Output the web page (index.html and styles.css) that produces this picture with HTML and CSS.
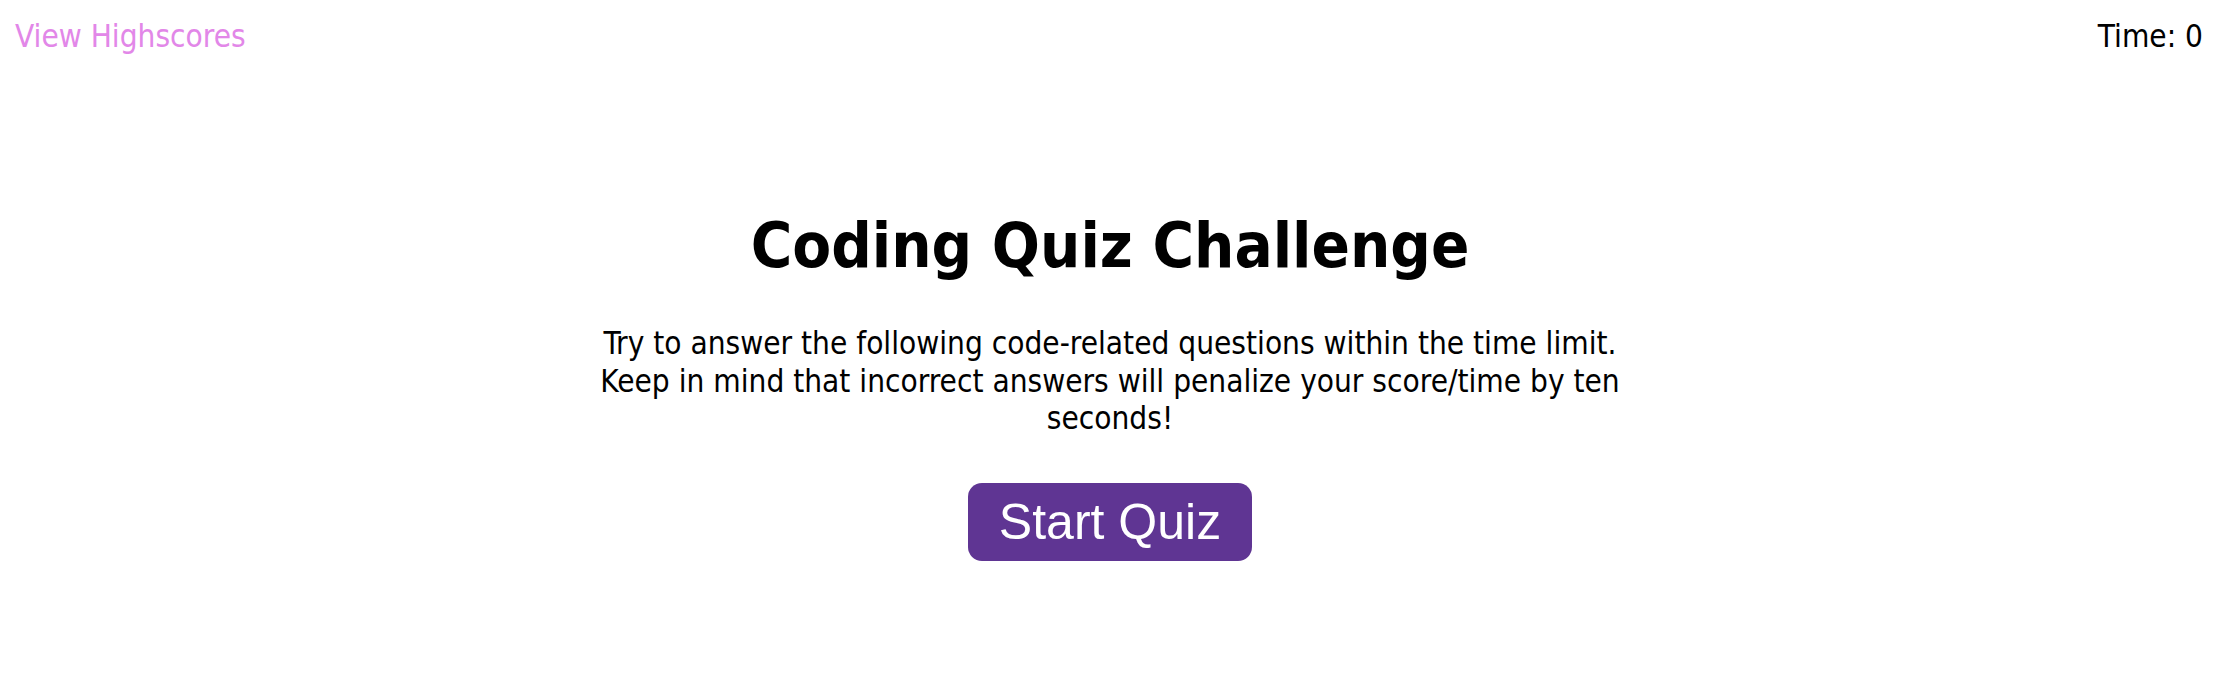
FILE: index.html
```html
<!DOCTYPE html>
<html lang="en">
<head>
<meta charset="utf-8">
<title>Coding Quiz Challenge</title>
<link rel="stylesheet" href="styles.css">
</head>
<body>
<header class="top-bar">
  <a class="highscores-link" href="#">View Highscores</a>
  <div class="timer">Time: <span class="timer-value">0</span></div>
</header>
<main class="intro">
  <h1 class="intro-title">Coding Quiz Challenge</h1>
  <p class="intro-text">Try to answer the following code-related questions within the time limit. Keep in mind that incorrect answers will penalize your score/time by ten seconds!</p>
  <button class="start-btn" type="button">Start Quiz</button>
</main>
</body>
</html>
```
FILE: styles.css
```css
html, body {
  margin: 0;
  padding: 0;
  background: #ffffff;
}

body {
  font-family: "DejaVu Sans Condensed", "DejaVu Sans", sans-serif;
  font-stretch: condensed;
  color: #000000;
}

.top-bar {
  display: flex;
  justify-content: space-between;
  align-items: flex-start;
  padding: 18px 17px 0 15px;
  font-size: 31.3px;
  line-height: 36px;
}

.highscores-link {
  color: #e287e8;
  text-decoration: none;
}

.timer {
  color: #000000;
}

.intro {
  display: flex;
  flex-direction: column;
  align-items: center;
  text-align: center;
}

.intro-title {
  margin: 154px 0 0;
  font-size: 63px;
  line-height: 76px;
  font-weight: bold;
}

.intro-text {
  width: 1060px;
  margin: 41px 0 0;
  font-size: 31.3px;
  line-height: 37.5px;
}

.start-btn {
  margin-top: 45px;
  width: 284px;
  height: 78px;
  padding: 0;
  border: none;
  border-radius: 14px;
  background: #5f3593;
  color: #ffffff;
  font-family: "Liberation Sans", Arial, sans-serif;
  font-stretch: normal;
  font-size: 50px;
  line-height: 78px;
  cursor: pointer;
}
```
